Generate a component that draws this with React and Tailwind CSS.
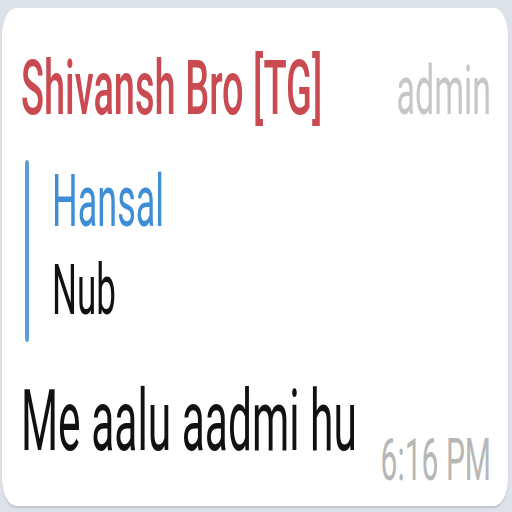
import React from "react";

const MessageBubble = () => {
  return (
    <div className="h-[249px] bg-white rounded-[14px] shadow-[0_1px_1px_rgba(0,0,0,0.12)] pt-[21px] pl-[19px] pr-[17px] flex flex-col">
      <div className="flex items-baseline justify-between">
        <span className="text-[38px] leading-none font-medium text-[#c94a51]">
          Shivansh Bro [TG]
        </span>
        <span className="text-[34px] leading-none text-[#c6c6c6]">admin</span>
      </div>

      <div className="mt-[17px] ml-[4px] flex h-[91px]">
        <div className="w-[4px] bg-[#5b9fd6] rounded-full"></div>
        <div className="pl-[23px] pt-[3px] flex flex-col">
          <span className="text-[36px] leading-none text-[#3d8ed6]">Hansal</span>
          <span className="mt-[9px] text-[35px] leading-none text-[#111]">Nub</span>
        </div>
      </div>

      <div className="mt-[19px] flex items-start justify-between">
        <span className="text-[42.5px] leading-none text-[#111]">Me aalu aadmi hu</span>
        <span className="mt-[25px] text-[30px] leading-none text-[#b7b7b7]">6:16 PM</span>
      </div>
    </div>
  );
};

export default function App() {
  return (
    <div
      className="w-[512px] h-[512px] bg-[#dde2e9] overflow-hidden"
      style={{ fontFamily: "Roboto, 'Liberation Sans', sans-serif" }}
    >
      <div className="h-[256px] origin-top scale-y-200 pt-[4px] pl-[2px] pr-[4px]">
        <MessageBubble />
      </div>
    </div>
  );
}
